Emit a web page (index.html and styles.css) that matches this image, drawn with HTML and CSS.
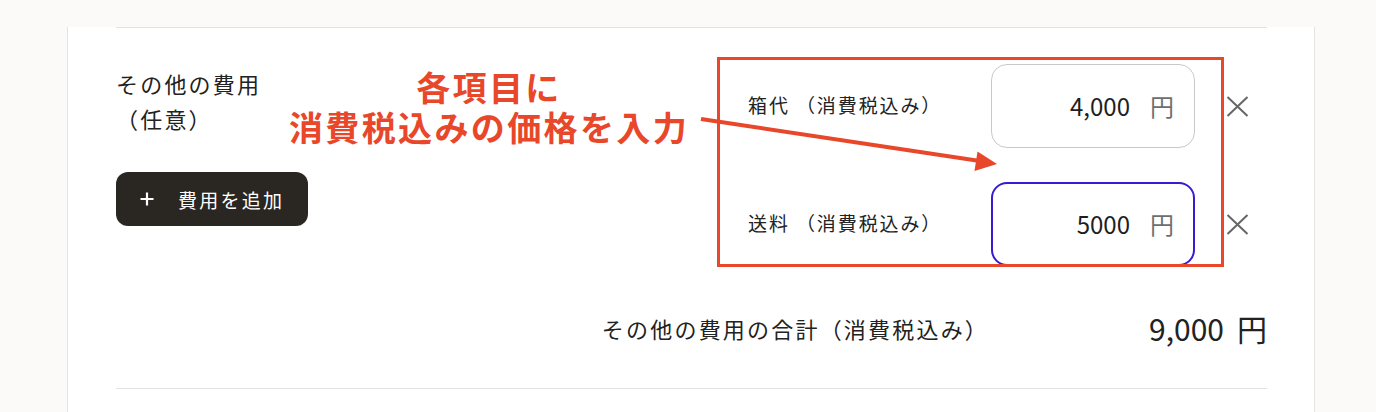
FILE: index.html
```html
<!DOCTYPE html>
<html lang="ja">
<head>
<meta charset="utf-8">
<title>その他の費用</title>
<link rel="stylesheet" href="styles.css">
</head>
<body>
<div class="page">
  <div class="card">
    <div class="rule rule-top"></div>
    <div class="fees">
      <div class="fees-left">
        <div class="fees-title">その他の費用<br>（任意）</div>
        <button class="add-btn" type="button">
          <svg class="add-icon" width="14" height="14" viewBox="0 0 14 14" aria-hidden="true"><path d="M7 0.5V13.5M0.5 7H13.5" stroke="#fff" stroke-width="2.2" fill="none"/></svg>
          <span class="add-text">費用を追加</span>
        </button>
      </div>
      <div class="fees-items">
        <div class="item">
          <span class="item-label">箱代 （消費税込み）</span>
          <div class="amount">
            <span class="amount-value">4,000</span>
            <span class="amount-unit">円</span>
          </div>
          <button class="remove" type="button" aria-label="削除">
            <svg width="23" height="21" viewBox="0 0 23 21" aria-hidden="true"><path d="M1.5 1L21.5 20M21.5 1L1.5 20" stroke="#666" stroke-width="2" fill="none"/></svg>
          </button>
        </div>
        <div class="item">
          <span class="item-label">送料 （消費税込み）</span>
          <div class="amount amount-focus">
            <span class="amount-value">5000</span>
            <span class="amount-unit">円</span>
          </div>
          <button class="remove" type="button" aria-label="削除">
            <svg width="23" height="21" viewBox="0 0 23 21" aria-hidden="true"><path d="M1.5 1L21.5 20M21.5 1L1.5 20" stroke="#666" stroke-width="2" fill="none"/></svg>
          </button>
        </div>
      </div>
    </div>
    <div class="total">
      <span class="total-label">その他の費用の合計（消費税込み）</span>
      <span class="total-value"><span class="total-num">9,000</span><span class="total-unit">円</span></span>
    </div>
    <div class="rule rule-bottom"></div>
  </div>

  <div class="annot-text">各項目に<br>消費税込みの価格を入力</div>
  <div class="annot-box"></div>
  <svg class="annot-arrow" width="1376" height="412" viewBox="0 0 1376 412" aria-hidden="true">
    <line x1="701" y1="119" x2="980" y2="161" stroke="#e8472a" stroke-width="4"/>
    <polygon points="997,164 977.5,151.5 974.5,171" fill="#e8472a"/>
  </svg>
</div>
</body>
</html>
```

FILE: styles.css
```css
* { box-sizing: border-box; }

html, body {
  margin: 0;
  padding: 0;
  background: #fbfaf8;
  font-family: "Noto Sans CJK JP", "Noto Sans", sans-serif;
  color: #222;
}

.page {
  position: relative;
  width: 1376px;
  height: 412px;
  overflow: hidden;
}

.card {
  margin-left: 67px;
  width: 1248px;
  min-height: 412px;
  background: #fff;
  border-left: 1px solid #e3e3e3;
  border-right: 1px solid #e3e3e3;
  padding: 0 47px 0 48px;
}

.rule {
  height: 1px;
  background: #e2e2e2;
}
.rule-top { margin-top: 27px; }
.rule-bottom { margin-top: 40px; }

.fees {
  display: flex;
  justify-content: space-between;
  align-items: flex-start;
  padding-top: 36px;
}

.fees-left {
  display: flex;
  flex-direction: column;
  align-items: flex-start;
}

.fees-title {
  margin-top: 2px;
  font-size: 22px;
  line-height: 35px;
  letter-spacing: 0.1em;
  color: #222;
}

.add-btn {
  margin-top: 36px;
  width: 192px;
  height: 54px;
  border: none;
  border-radius: 12px;
  background: #2a2622;
  color: #fff;
  display: flex;
  align-items: center;
  padding: 0 0 0 24px;
  gap: 24px;
  font-family: inherit;
  cursor: pointer;
}

.add-icon { display: block; flex: none; }

.add-text {
  font-size: 19px;
  letter-spacing: 0.12em;
  line-height: 1;
  color: #fff;
}

.fees-items {
  width: 509px;
  margin-right: 10px;
  display: flex;
  flex-direction: column;
  gap: 34px;
}

.item {
  display: flex;
  align-items: center;
  height: 84px;
}

.item-label {
  flex: 1;
  font-size: 19px;
  letter-spacing: 0.1em;
  color: #222;
  margin-top: -3px;
}

.amount {
  width: 204px;
  height: 84px;
  border: 1px solid #c9c9c9;
  border-radius: 16px;
  display: flex;
  align-items: center;
  justify-content: flex-end;
  gap: 20px;
  padding: 0 20px 0 16px;
}

.amount-focus {
  border: 2px solid #3b1ad1;
  padding: 0 19px 0 15px;
}

.amount-value {
  font-size: 24px;
  color: #1e1e1e;
  line-height: 1;
}

.amount-unit {
  font-size: 24px;
  color: #6e6e6e;
  line-height: 1;
}

.remove {
  margin-left: 22px;
  width: 40px;
  height: 40px;
  border: none;
  background: none;
  padding: 0;
  display: flex;
  align-items: center;
  justify-content: center;
  cursor: pointer;
}
.remove svg { display: block; }

.total {
  margin-top: 42px;
  height: 40px;
  display: flex;
  justify-content: flex-end;
  align-items: center;
  gap: 160px;
}

.total-label {
  font-size: 22px;
  letter-spacing: 0.1em;
  color: #222;
}

.total-value {
  display: flex;
  align-items: center;
  gap: 13px;
  font-size: 30px;
  color: #222;
  line-height: 40px;
}

/* annotation overlays */
.annot-text {
  position: absolute;
  left: 250px;
  top: 67px;
  width: 478px;
  text-align: center;
  font-size: 34px;
  font-weight: 700;
  line-height: 40px;
  letter-spacing: 0.07em;
  color: #e8472a;
}

.annot-box {
  position: absolute;
  left: 717px;
  top: 57px;
  width: 507px;
  height: 210px;
  border: 3px solid #e8472a;
}

.annot-arrow {
  position: absolute;
  left: 0;
  top: 0;
  pointer-events: none;
}
```
